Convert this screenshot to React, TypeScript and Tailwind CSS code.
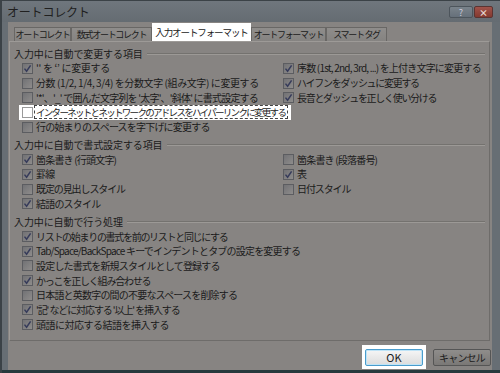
import React from 'react';

type Item = { label: string; checked: boolean; focus?: boolean; tr?: string };

// 入力中に自動で変更する項目
const changeLeft: Item[] = [
  { label: "'' を ‘’ に変更する", checked: true, tr: 'tracking-[-0.3px]' },
  { label: '分数 (1/2, 1/4, 3/4) を分数文字 (組み文字) に変更する', checked: false, tr: 'tracking-[-0.4px]' },
  { label: "'*'、'_' で囲んだ文字列を '太字'、'斜体' に書式設定する", checked: false },
  { label: 'インターネットとネットワークのアドレスをハイパーリンクに変更する', checked: false, focus: true, tr: 'text-[9.5px] tracking-[-1.7px]' },
  { label: '行の始まりのスペースを字下げに変更する', checked: false },
];
const changeRight: Item[] = [
  { label: '序数 (1st, 2nd, 3rd, ...) を上付き文字に変更する', checked: true },
  { label: 'ハイフンをダッシュに変更する', checked: true, tr: 'tracking-[-1.3px]' },
  { label: '長音とダッシュを正しく使い分ける', checked: true, tr: 'tracking-[-1.3px]' },
];

// 入力中に自動で書式設定する項目
const formatLeft: Item[] = [
  { label: '箇条書き (行頭文字)', checked: true },
  { label: '罫線', checked: true },
  { label: '既定の見出しスタイル', checked: false, tr: 'tracking-[-1.1px]' },
  { label: '結語のスタイル', checked: true },
];
const formatRight: Item[] = [
  { label: '箇条書き (段落番号)', checked: false },
  { label: '表', checked: true },
  { label: '日付スタイル', checked: false, tr: 'tracking-[-1.1px]' },
];

// 入力中に自動で行う処理
const actions: Item[] = [
  { label: 'リストの始まりの書式を前のリストと同じにする', checked: true, tr: 'tracking-[-1.3px]' },
  { label: 'Tab/Space/BackSpace キーでインデントとタブの設定を変更する', checked: true },
  { label: '設定した書式を新規スタイルとして登録する', checked: false },
  { label: 'かっこを正しく組み合わせる', checked: true, tr: 'tracking-[-1.2px]' },
  { label: '日本語と英数字の間の不要なスペースを削除する', checked: false },
  { label: "'記' などに対応する '以上' を挿入する", checked: true, tr: 'tracking-[-1.1px]' },
  { label: '頭語に対応する結語を挿入する', checked: true, tr: 'tracking-[-0.5px]' },
];

const tabs = [
  { label: 'オートコレクト', w: 'w-[57px]' },
  { label: '数式オートコレクト', w: 'w-[81px]' },
  { label: '入力オートフォーマット', w: 'w-[99px]', active: true },
  { label: 'オートフォーマット', w: 'w-[75px]' },
  { label: 'スマート タグ', w: 'w-[61px]' },
];

function Check({ checked, light }: { checked: boolean; light?: boolean }) {
  return (
    <span
      className={`flex h-[11px] w-[11px] shrink-0 items-center justify-center border ${
        light ? 'border-[#9a9a9a] bg-white' : 'border-[#5c5d61] bg-gradient-to-br from-[#727275] to-[#8e8c8b]'
      }`}
    >
      {checked && (
        <svg width="9" height="9" viewBox="0 0 9 9">
          <path d="M1.5 4.6 L3.6 7.2 L7.6 1.4" fill="none" stroke="#363b5a" strokeWidth="1.5" />
        </svg>
      )}
    </span>
  );
}

function Row({ item }: { item: Item }) {
  const tr = item.tr ?? 'tracking-[-0.8px]';
  if (item.focus) {
    return (
      <div className="flex h-[14.7px] items-center">
        <div className="-ml-[3px] flex h-[15px] w-fit items-center bg-white pl-[3px] pr-[3px]">
          <Check checked={item.checked} light />
          <span className={`ml-[1px] whitespace-nowrap border border-dashed border-[#444] pl-[1px] pr-[2px] leading-[12px] ${tr}`}>
            {item.label}
          </span>
        </div>
      </div>
    );
  }
  return (
    <div className="flex h-[14.7px] items-center">
      <Check checked={item.checked} />
      <span className={`ml-[3px] whitespace-nowrap leading-[12px] ${tr}`}>{item.label}</span>
    </div>
  );
}

function Header({ title, first }: { title: string; first?: boolean }) {
  return (
    <div className={`flex h-[15px] items-center gap-[4px] pl-[4px] pr-[4px] ${first ? '' : 'mt-[3px]'}`}>
      <span className="whitespace-nowrap tracking-[-0.1px]">{title}</span>
      <div className="h-[2px] flex-1 border-t border-b border-t-[#74726f] border-b-[#9c9996]" />
    </div>
  );
}

function Column({ items }: { items: Item[] }) {
  return (
    <div className="flex flex-col">
      {items.map((it) => (
        <Row key={it.label} item={it} />
      ))}
    </div>
  );
}

export default function App() {
  return (
    <div className="flex h-[373px] w-[500px] flex-col overflow-hidden border-l-[2px] border-[#3b4247] bg-[#676e74] text-[10px] text-[#1b1b1b] font-['Noto_Sans_CJK_JP','Noto_Sans',sans-serif]">
      {/* title bar */}
      <div className="flex h-[22px] shrink-0 items-start border-t-[1px] border-[#3b4247] bg-gradient-to-b from-[#6f767d] to-[#656c72] pl-[5px] pr-[7px]">
        <span className="mt-[3px] text-[12px] leading-[15px] tracking-[-0.2px] text-[#202020]">オートコレクト</span>
        <div className="ml-auto mt-[5px] flex gap-[1px]">
          <div className="flex h-[12px] w-[24px] items-center justify-center rounded-[2px] border border-[#4d555c] bg-gradient-to-b from-[#7a838b] to-[#66707a] text-[9px] leading-none text-[#ccd]">
            ?
          </div>
          <div className="flex h-[12px] w-[19px] items-center justify-center rounded-[2px] border border-[#5a3432] bg-gradient-to-b from-[#a0534b] to-[#84392f] text-[9px] font-bold leading-none text-[#e8d8d6]">
            ×
          </div>
        </div>
      </div>

      {/* body */}
      <div className="ml-[6px] mr-[8px] flex h-[348px] shrink-0 flex-col bg-[#878482]">
        {/* tabs */}
        <div className="flex h-[19px] items-end pl-[6px]">
          {tabs.map((t) =>
            t.active ? (
              <div
                key={t.label}
                className={`${t.w} flex h-[18px] items-center justify-center whitespace-nowrap bg-white pt-[1px] text-[9.5px] tracking-[-1.1px]`}
              >
                {t.label}
              </div>
            ) : (
              <div
                key={t.label}
                className={`${t.w} flex h-[14px] items-center justify-center whitespace-nowrap border border-b-0 border-[#696765] bg-gradient-to-b from-[#8f8d8b] to-[#858381] text-[9px] tracking-[-1.3px]`}
              >
                {t.label}
              </div>
            )
          )}
        </div>

        {/* panel */}
        <div className="ml-[1px] mr-[2px] flex h-[300px] flex-col border border-[#9d9a97] border-r-[#6e6c6a] border-b-[#6e6c6a] pt-[4px]">
          <Header title="入力中に自動で変更する項目" first />
          <div className="grid grid-cols-[261px_1fr] pl-[12px]">
            <Column items={changeLeft} />
            <Column items={changeRight} />
          </div>

          <Header title="入力中に自動で書式設定する項目" />
          <div className="grid grid-cols-[261px_1fr] pl-[12px]">
            <Column items={formatLeft} />
            <Column items={formatRight} />
          </div>

          <Header title="入力中に自動で行う処理" />
          <div className="pl-[12px]">
            <Column items={actions} />
          </div>
        </div>

        {/* buttons */}
        <div className="flex items-start justify-end gap-[7px] pr-[1px] pt-[4px]">
          <div className="bg-white pb-[3px] pl-[3px] pr-[3px] pt-[4px]">
            <div className="flex h-[17px] w-[58px] items-center justify-center rounded-[2px] border border-[#4a9ccc] bg-gradient-to-b from-[#f6f6f6] to-[#dcdcdc] text-[11px] shadow-[inset_0_0_0_1px_#bfe4f7]">
              OK
            </div>
          </div>
          <div className="mt-[4px] flex h-[17px] w-[58px] items-center justify-center rounded-[2px] border border-[#555] bg-gradient-to-b from-[#8f8d8b] to-[#7a7876] tracking-[-0.8px]">
            キャンセル
          </div>
        </div>
      </div>
      <div className="h-[3px] shrink-0 bg-[#28393d]" />
    </div>
  );
}
